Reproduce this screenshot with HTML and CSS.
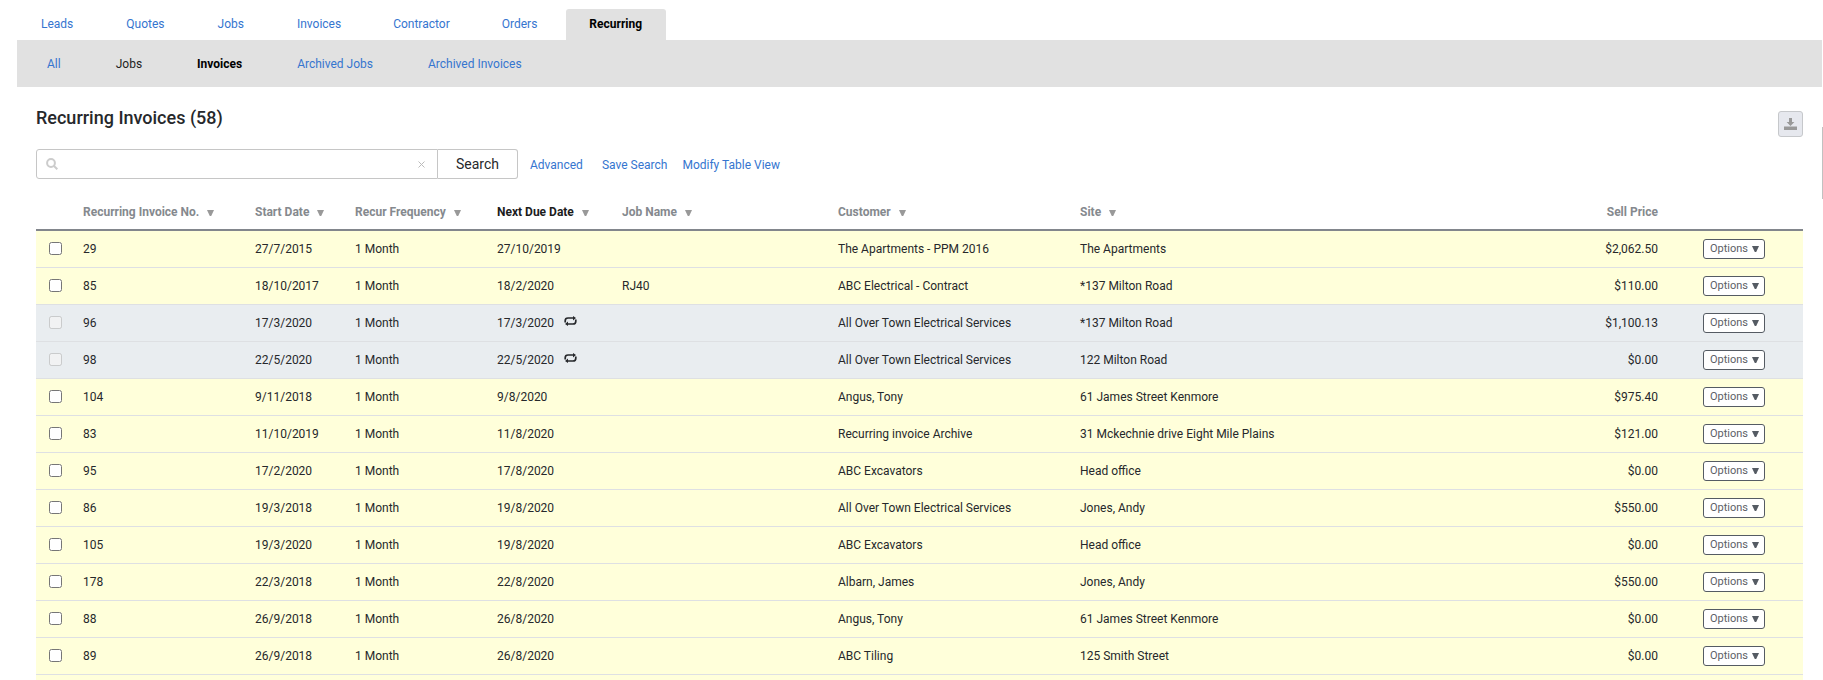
FILE: index.html
```html
<!DOCTYPE html>
<html lang="en">
<head>
<meta charset="utf-8">
<title>Recurring Invoices</title>
<link rel="stylesheet" href="styles.css">
</head>
<body>
<svg class="sprite" aria-hidden="true">
  <symbol id="arrow" viewBox="0 0 7 6"><path d="M0 0h7L4.2 6H2.8z"/></symbol>
  <symbol id="repeat" viewBox="0 0 13 10"><path d="M1.2 6.4V4.8Q1.2 2 4 2H9.6M11.800 3.600V5.200Q11.800 8 9 8H3.400" fill="none" stroke="currentColor" stroke-width="1.700"/><path d="M9 0l3 2-3 2.400zM4 5.600L1 8l3 2z"/></symbol>
</svg>
<nav class="tabs" aria-label="Sections">
  <a class="tab" href="#">Leads</a>
  <a class="tab" href="#">Quotes</a>
  <a class="tab" href="#">Jobs</a>
  <a class="tab" href="#">Invoices</a>
  <a class="tab" href="#">Contractor</a>
  <a class="tab" href="#">Orders</a>
  <a class="tab tab-active" href="#">Recurring</a>
</nav>
<nav class="subnav" aria-label="Recurring">
  <a href="#">All</a>
  <a class="dark" href="#">Jobs</a>
  <a class="current" href="#">Invoices</a>
  <a href="#">Archived Jobs</a>
  <a href="#">Archived Invoices</a>
</nav>
<main class="content">
  <header class="page-head">
    <h1>Recurring Invoices (58)</h1>
    <button class="download" type="button" aria-label="Download"><svg width="13" height="12" viewBox="0 0 13 12"><path d="M5 0h3v4h2.400L6.500 8 2.600 4H5zM0 8.500h13V12H0z"/></svg></button>
  </header>
  <form class="search">
    <div class="field">
      <svg class="lens" width="12" height="12" viewBox="0 0 12 12"><circle cx="5" cy="5" r="3.900"/><path d="M8 8l3.300 3.300"/></svg>
      <input type="text" aria-label="Search invoices">
      <button class="clear" type="button" aria-label="Clear"><svg width="7" height="7" viewBox="0 0 7 7"><path d="M.5 .5l6 6M6.500 .5l-6 6"/></svg></button>
    </div>
    <button class="go" type="button">Search</button>
    <div class="search-links">
      <a class="advanced" href="#">Advanced</a>
      <a href="#">Save Search</a>
      <a href="#">Modify Table View</a>
    </div>
  </form>
  <table class="grid">
    <colgroup><col class="c-check"><col class="c-no"><col class="c-start"><col class="c-freq"><col class="c-due"><col class="c-job"><col class="c-cust"><col><col class="c-price"><col class="c-opt"></colgroup>
    <thead>
      <tr><th></th><th>Recurring Invoice No.<svg class="sort"><use href="#arrow"/></svg></th><th>Start Date<svg class="sort"><use href="#arrow"/></svg></th><th>Recur Frequency<svg class="sort"><use href="#arrow"/></svg></th><th class="sorted">Next Due Date<svg class="sort"><use href="#arrow"/></svg></th><th>Job Name<svg class="sort"><use href="#arrow"/></svg></th><th>Customer<svg class="sort"><use href="#arrow"/></svg></th><th>Site<svg class="sort"><use href="#arrow"/></svg></th><th class="price">Sell Price</th><th></th></tr>
    </thead>
    <tbody>
      <tr><td><input type="checkbox" aria-label="Select 29"></td><td>29</td><td>27/7/2015</td><td>1 Month</td><td>27/10/2019</td><td></td><td>The Apartments - PPM 2016</td><td>The Apartments</td><td class="price">$2,062.50</td><td class="opt"><button class="options" type="button">Options<svg><use href="#arrow"/></svg></button></td></tr>
      <tr><td><input type="checkbox" aria-label="Select 85"></td><td>85</td><td>18/10/2017</td><td>1 Month</td><td>18/2/2020</td><td>RJ40</td><td>ABC Electrical - Contract</td><td>*137 Milton Road</td><td class="price">$110.00</td><td class="opt"><button class="options" type="button">Options<svg><use href="#arrow"/></svg></button></td></tr>
      <tr class="locked"><td><input type="checkbox" aria-label="Select 96" disabled></td><td>96</td><td>17/3/2020</td><td>1 Month</td><td>17/3/2020<svg class="repeat"><use href="#repeat"/></svg></td><td></td><td>All Over Town Electrical Services</td><td>*137 Milton Road</td><td class="price">$1,100.13</td><td class="opt"><button class="options" type="button">Options<svg><use href="#arrow"/></svg></button></td></tr>
      <tr class="locked"><td><input type="checkbox" aria-label="Select 98" disabled></td><td>98</td><td>22/5/2020</td><td>1 Month</td><td>22/5/2020<svg class="repeat"><use href="#repeat"/></svg></td><td></td><td>All Over Town Electrical Services</td><td>122 Milton Road</td><td class="price">$0.00</td><td class="opt"><button class="options" type="button">Options<svg><use href="#arrow"/></svg></button></td></tr>
      <tr><td><input type="checkbox" aria-label="Select 104"></td><td>104</td><td>9/11/2018</td><td>1 Month</td><td>9/8/2020</td><td></td><td>Angus, Tony</td><td>61 James Street Kenmore</td><td class="price">$975.40</td><td class="opt"><button class="options" type="button">Options<svg><use href="#arrow"/></svg></button></td></tr>
      <tr><td><input type="checkbox" aria-label="Select 83"></td><td>83</td><td>11/10/2019</td><td>1 Month</td><td>11/8/2020</td><td></td><td>Recurring invoice Archive</td><td>31 Mckechnie drive Eight Mile Plains</td><td class="price">$121.00</td><td class="opt"><button class="options" type="button">Options<svg><use href="#arrow"/></svg></button></td></tr>
      <tr><td><input type="checkbox" aria-label="Select 95"></td><td>95</td><td>17/2/2020</td><td>1 Month</td><td>17/8/2020</td><td></td><td>ABC Excavators</td><td>Head office</td><td class="price">$0.00</td><td class="opt"><button class="options" type="button">Options<svg><use href="#arrow"/></svg></button></td></tr>
      <tr><td><input type="checkbox" aria-label="Select 86"></td><td>86</td><td>19/3/2018</td><td>1 Month</td><td>19/8/2020</td><td></td><td>All Over Town Electrical Services</td><td>Jones, Andy</td><td class="price">$550.00</td><td class="opt"><button class="options" type="button">Options<svg><use href="#arrow"/></svg></button></td></tr>
      <tr><td><input type="checkbox" aria-label="Select 105"></td><td>105</td><td>19/3/2020</td><td>1 Month</td><td>19/8/2020</td><td></td><td>ABC Excavators</td><td>Head office</td><td class="price">$0.00</td><td class="opt"><button class="options" type="button">Options<svg><use href="#arrow"/></svg></button></td></tr>
      <tr><td><input type="checkbox" aria-label="Select 178"></td><td>178</td><td>22/3/2018</td><td>1 Month</td><td>22/8/2020</td><td></td><td>Albarn, James</td><td>Jones, Andy</td><td class="price">$550.00</td><td class="opt"><button class="options" type="button">Options<svg><use href="#arrow"/></svg></button></td></tr>
      <tr><td><input type="checkbox" aria-label="Select 88"></td><td>88</td><td>26/9/2018</td><td>1 Month</td><td>26/8/2020</td><td></td><td>Angus, Tony</td><td>61 James Street Kenmore</td><td class="price">$0.00</td><td class="opt"><button class="options" type="button">Options<svg><use href="#arrow"/></svg></button></td></tr>
      <tr><td><input type="checkbox" aria-label="Select 89"></td><td>89</td><td>26/9/2018</td><td>1 Month</td><td>26/8/2020</td><td></td><td>ABC Tiling</td><td>125 Smith Street</td><td class="price">$0.00</td><td class="opt"><button class="options" type="button">Options<svg><use href="#arrow"/></svg></button></td></tr>
      <tr><td></td><td></td><td></td><td></td><td></td><td></td><td></td><td></td><td></td><td></td></tr>
    </tbody>
  </table>
</main>
<div class="edge-handle"></div>
</body>
</html>
```

FILE: styles.css
```css
* { box-sizing: border-box; }
html { overflow: hidden; }
body {
  margin: 0;
  padding: 9px 1px 0 17px;
  font: 12px/16px Roboto, "Liberation Sans", sans-serif;
  color: #26282b;
  background: #fff;
}
a { color: #3575cf; text-decoration: none; }
button, input { font: inherit; color: inherit; margin: 0; }
button { cursor: pointer; }
.sprite { display: none; }

.tabs { display: flex; gap: 5px; }
.tab { padding: 7px 24px 8px 23px; border-radius: 3px 3px 0 0; }
.tab:first-child { padding-left: 24px; }
.tab:nth-child(-n+3) { padding-right: 25px; }
.tab-active { background: #e1e1e1; color: #000; font-weight: 700; }

.subnav {
  display: flex;
  gap: 55px;
  padding: 16px 30px 15px;
  background: #e1e1e1;
}
.subnav .dark { color: #222; }
.subnav .current { color: #000; font-weight: 700; }

.content { padding: 19px 19px 0; }
.page-head {
  display: flex;
  justify-content: space-between;
  align-items: flex-start;
  padding-top: 5px;
}
h1 { margin: -5px 0 0; font-size: 18px; line-height: 24px; font-weight: 500; }
.download {
  display: flex;
  align-items: center;
  justify-content: center;
  width: 25px;
  height: 26px;
  padding: 0 1px 1px 0;
  border: 1px solid #c6c8cb;
  border-radius: 3px;
  background: #e6e8ee;
}
.download svg { fill: #999; }

.search { display: flex; margin-top: 12px; }
.field {
  display: flex;
  align-items: center;
  width: 402px;
  height: 30px;
  padding: 0 12px 0 9px;
  border: 1px solid #c6c6c6;
  border-radius: 3px 0 0 3px;
}
.field input { flex: 1; min-width: 0; border: 0; outline: 0; background: none; }
.lens { fill: none; stroke: #ccc; stroke-width: 2; }
.clear { display: flex; padding: 0; border: 0; background: none; }
.clear svg { stroke: #bbb; fill: none; }
.go {
  width: 80px;
  padding: 0;
  border: 1px solid #c6c6c6;
  border-left: 0;
  border-radius: 0 3px 3px 0;
  background: #fff;
  font-size: 14px;
}
.search-links { display: flex; align-items: center; gap: 15px; padding: 2px 0 0 12px; }
.advanced { margin-right: 4px; }

.grid {
  width: 100%;
  margin-top: 14px;
  table-layout: fixed;
  border-collapse: separate;
  border-spacing: 0;
}
.c-check { width: 37px; }
.c-no { width: 172px; }
.c-start { width: 100px; }
.c-freq { width: 142px; }
.c-due { width: 125px; }
.c-job { width: 216px; }
.c-cust { width: 242px; }
.c-price { width: 120px; }
.c-opt { width: 135px; }
.grid th, .grid td { padding: 0 10px; text-align: left; white-space: nowrap; }
.grid th {
  height: 38px;
  padding-top: 2px;
  border-bottom: 2px solid #82868c;
  color: #85898e;
  font-weight: 700;
}
.grid th.sorted { color: #1c1c1c; }
.sort { width: 7px; height: 6px; margin-left: 8px; fill: #999; }
.grid td { height: 37px; border-bottom: 1px solid #dee0e3; background: #ffffda; }
.grid .locked td { background: #e9edf0; }
.grid td:first-child { padding: 0 10px 2px 13px; }
.grid input { display: block; width: 13px; height: 13px; }
.grid .price { text-align: right; }
.grid .opt { padding-left: 35px; }
.repeat { width: 13px; height: 10px; margin-left: 10px; fill: currentColor; vertical-align: 1px; }
.options {
  display: flex;
  align-items: center;
  justify-content: space-between;
  width: 62px;
  height: 20px;
  padding: 0 5px 0 6px;
  border: 1px solid #555b63;
  border-radius: 3px;
  background: #fff;
  color: #5c6066;
  font-size: 11px;
}
.options svg { width: 7px; height: 6px; fill: #555b63; }

.edge-handle {
  position: absolute;
  top: 127px;
  right: 0;
  width: 1px;
  height: 72px;
  background: #c1c1c1;
}
```
